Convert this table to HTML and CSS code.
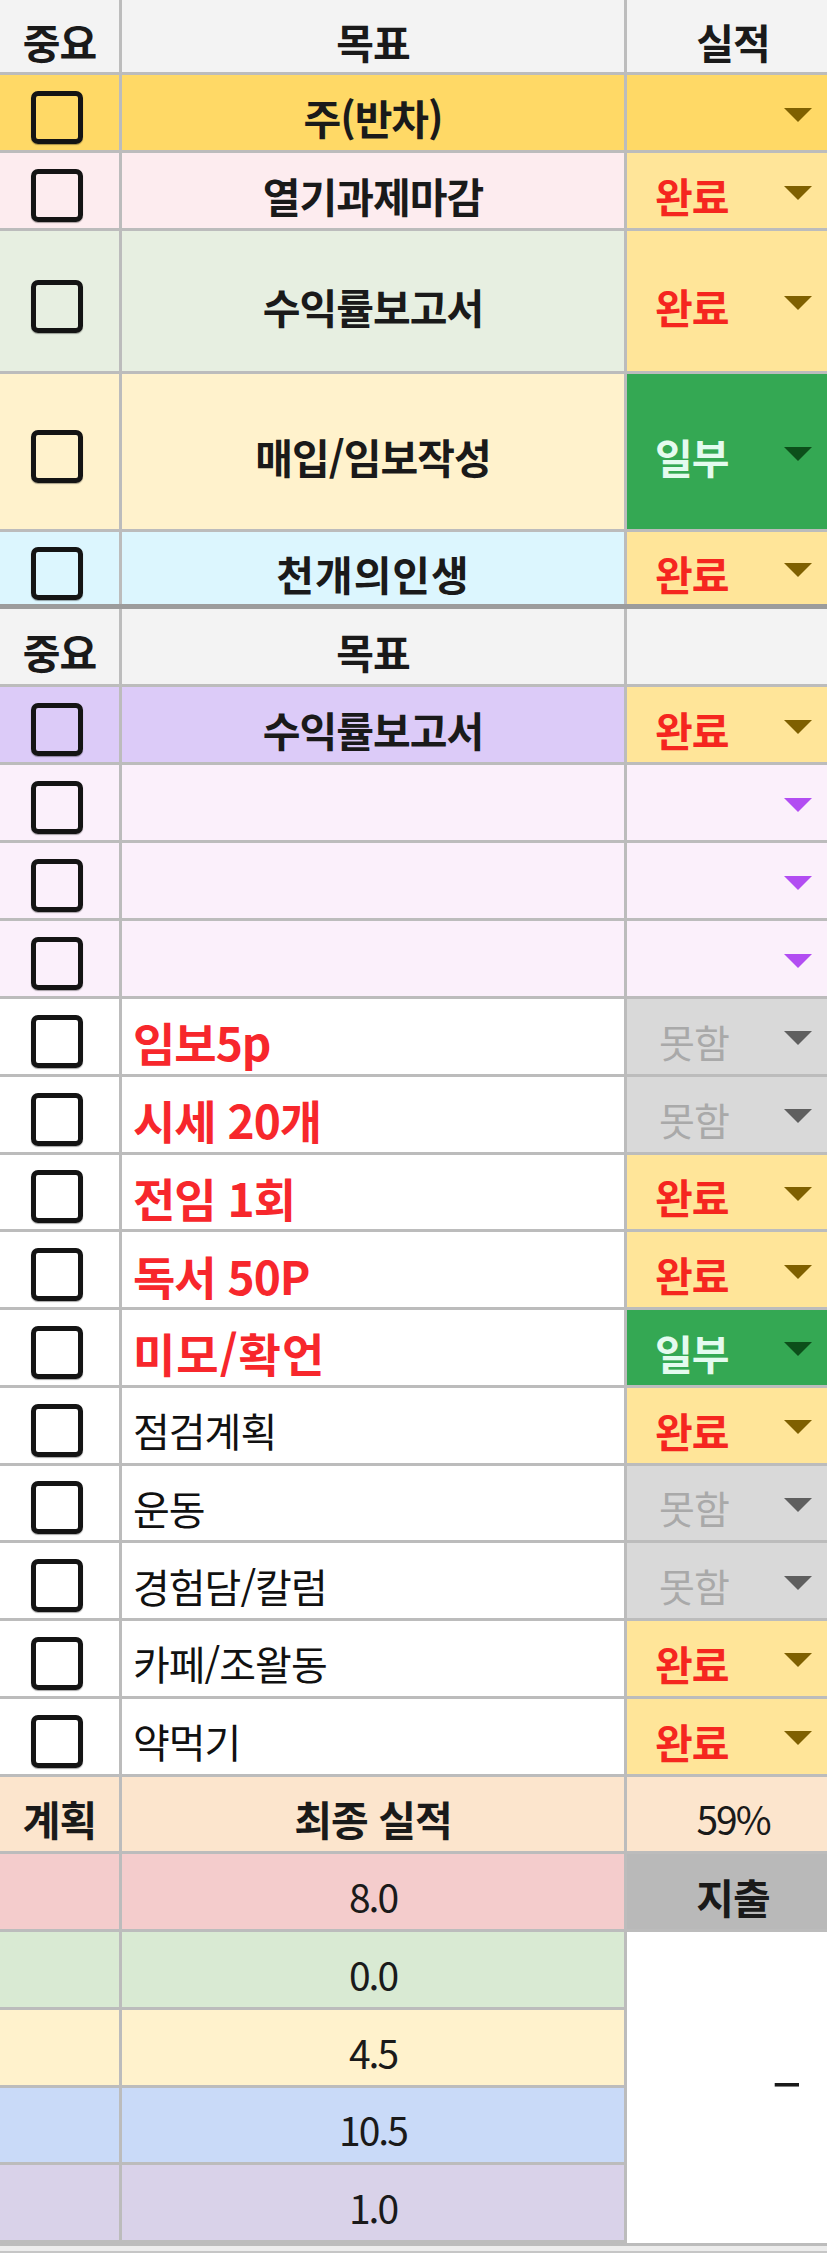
FILE: index.html
```html
<!DOCTYPE html>
<html lang="ko">
<head>
<meta charset="utf-8">
<title>목표 실적</title>
<link rel="stylesheet" href="styles.css">
</head>
<body>
<div class="sheet">
  <div class="grid top">
    <div class="c hd b">중요</div>
    <div class="c hd b">목표</div>
    <div class="c hd b">실적</div>

    <div class="c yel"><span class="cb"></span></div>
    <div class="c yel b">주(반차)</div>
    <div class="c yel dd"><span class="t"></span><svg class="arr gold" viewBox="0 0 28 14"><path d="M0 0H28L14 14Z"/></svg></div>

    <div class="c pink"><span class="cb"></span></div>
    <div class="c pink b">열기과제마감</div>
    <div class="c chip-done dd"><span class="t done">완료</span><svg class="arr gold" viewBox="0 0 28 14"><path d="M0 0H28L14 14Z"/></svg></div>

    <div class="c sage"><span class="cb"></span></div>
    <div class="c sage b">수익률보고서</div>
    <div class="c chip-done dd"><span class="t done">완료</span><svg class="arr gold" viewBox="0 0 28 14"><path d="M0 0H28L14 14Z"/></svg></div>

    <div class="c cream"><span class="cb"></span></div>
    <div class="c cream b">매입/임보작성</div>
    <div class="c chip-part dd"><span class="t part">일부</span><svg class="arr dgreen" viewBox="0 0 28 14"><path d="M0 0H28L14 14Z"/></svg></div>

    <div class="c cyan"><span class="cb"></span></div>
    <div class="c cyan b wide">천개의인생</div>
    <div class="c chip-done dd"><span class="t done">완료</span><svg class="arr gold" viewBox="0 0 28 14"><path d="M0 0H28L14 14Z"/></svg></div>
  </div>
  <div class="sep"></div>
  <div class="grid bottom">
    <div class="c hd b">중요</div>
    <div class="c hd b">목표</div>
    <div class="c hd"></div>

    <div class="c violet"><span class="cb"></span></div>
    <div class="c violet b">수익률보고서</div>
    <div class="c chip-done dd"><span class="t done">완료</span><svg class="arr gold" viewBox="0 0 28 14"><path d="M0 0H28L14 14Z"/></svg></div>

    <div class="c lilac"><span class="cb"></span></div>
    <div class="c lilac"></div>
    <div class="c lilac dd"><span class="t"></span><svg class="arr purple" viewBox="0 0 28 14"><path d="M0 0H28L14 14Z"/></svg></div>

    <div class="c lilac"><span class="cb"></span></div>
    <div class="c lilac"></div>
    <div class="c lilac dd"><span class="t"></span><svg class="arr purple" viewBox="0 0 28 14"><path d="M0 0H28L14 14Z"/></svg></div>

    <div class="c lilac"><span class="cb"></span></div>
    <div class="c lilac"></div>
    <div class="c lilac dd"><span class="t"></span><svg class="arr purple" viewBox="0 0 28 14"><path d="M0 0H28L14 14Z"/></svg></div>

    <div class="c wh"><span class="cb"></span></div>
    <div class="c wh task red">임보5p</div>
    <div class="c chip-not dd"><span class="t not">못함</span><svg class="arr gray" viewBox="0 0 28 14"><path d="M0 0H28L14 14Z"/></svg></div>

    <div class="c wh"><span class="cb"></span></div>
    <div class="c wh task red">시세 20개</div>
    <div class="c chip-not dd"><span class="t not">못함</span><svg class="arr gray" viewBox="0 0 28 14"><path d="M0 0H28L14 14Z"/></svg></div>

    <div class="c wh"><span class="cb"></span></div>
    <div class="c wh task red">전임 1회</div>
    <div class="c chip-done dd"><span class="t done">완료</span><svg class="arr gold" viewBox="0 0 28 14"><path d="M0 0H28L14 14Z"/></svg></div>

    <div class="c wh"><span class="cb"></span></div>
    <div class="c wh task red">독서 50P</div>
    <div class="c chip-done dd"><span class="t done">완료</span><svg class="arr gold" viewBox="0 0 28 14"><path d="M0 0H28L14 14Z"/></svg></div>

    <div class="c wh"><span class="cb"></span></div>
    <div class="c wh task red wide">미모/확언</div>
    <div class="c chip-part dd"><span class="t part">일부</span><svg class="arr dgreen" viewBox="0 0 28 14"><path d="M0 0H28L14 14Z"/></svg></div>

    <div class="c wh"><span class="cb"></span></div>
    <div class="c wh task plain">점검계획</div>
    <div class="c chip-done dd"><span class="t done">완료</span><svg class="arr gold" viewBox="0 0 28 14"><path d="M0 0H28L14 14Z"/></svg></div>

    <div class="c wh"><span class="cb"></span></div>
    <div class="c wh task plain">운동</div>
    <div class="c chip-not dd"><span class="t not">못함</span><svg class="arr gray" viewBox="0 0 28 14"><path d="M0 0H28L14 14Z"/></svg></div>

    <div class="c wh"><span class="cb"></span></div>
    <div class="c wh task plain">경험담/칼럼</div>
    <div class="c chip-not dd"><span class="t not">못함</span><svg class="arr gray" viewBox="0 0 28 14"><path d="M0 0H28L14 14Z"/></svg></div>

    <div class="c wh"><span class="cb"></span></div>
    <div class="c wh task plain">카페/조왈동</div>
    <div class="c chip-done dd"><span class="t done">완료</span><svg class="arr gold" viewBox="0 0 28 14"><path d="M0 0H28L14 14Z"/></svg></div>

    <div class="c wh"><span class="cb"></span></div>
    <div class="c wh task plain">약먹기</div>
    <div class="c chip-done dd"><span class="t done">완료</span><svg class="arr gold" viewBox="0 0 28 14"><path d="M0 0H28L14 14Z"/></svg></div>

    <div class="c peach b">계획</div>
    <div class="c peach b">최종 실적</div>
    <div class="c peach num">59%</div>

    <div class="c rose"></div>
    <div class="c rose num">8.0</div>
    <div class="c graycell b">지출</div>

    <div class="c mint"></div>
    <div class="c mint num">0.0</div>
    <div class="c merged"><span class="dash">-</span></div>

    <div class="c butter"></div>
    <div class="c butter num">4.5</div>

    <div class="c sky"></div>
    <div class="c sky num">10.5</div>

    <div class="c mauve"></div>
    <div class="c mauve num">1.0</div>
  </div>
  <div class="foot"></div>
</div>
</body>
</html>
```

FILE: styles.css
```css
html, body {
  margin: 0;
  padding: 0;
  background: #ffffff;
}

body {
  font-family: "Noto Sans CJK KR", "Noto Sans", sans-serif;
  color: #1a1a1a;
}

.sheet {
  width: 827px;
  overflow: hidden;
}

.grid {
  display: grid;
  grid-template-columns: 119px 502px 212px;
  column-gap: 3px;
  row-gap: 3px;
  width: 839px;
  background: #bcbcbc;
}

.top {
  grid-template-rows: 72px 75px 75px 140px 155px 72px;
}

.bottom {
  grid-template-rows: 75px 75px 75px 75px 75px repeat(16, 74.75px);
}

.sep {
  height: 5px;
  width: 839px;
  background: #9c9c9c;
}

.foot {
  height: 5px;
  border-top: 3px solid #bcbcbc;
  border-bottom: 2px solid #c6c6c6;
  background: #ececec;
  width: 839px;
}

.c {
  display: flex;
  align-items: center;
  justify-content: center;
  box-sizing: border-box;
  padding-top: 10px;
  font-size: 41px;
  line-height: 1;
  letter-spacing: -1px;
  white-space: nowrap;
  overflow: hidden;
}

.b {
  font-weight: 700;
}

.wide {
  letter-spacing: 1px;
}

.hd { background: #f3f3f3; }
.yel { background: #ffd966; }
.pink { background: #fdecef; }
.sage { background: #e7efe1; }
.cream { background: #fff2cc; }
.cyan { background: #dcf6fe; }
.violet { background: #dccbf8; }
.lilac { background: #fbf0fb; }
.wh { background: #ffffff; }
.peach { background: #fce5cd; }
.rose { background: #f4cccc; }
.mint { background: #d9ead3; }
.butter { background: #fff2cc; }
.sky { background: #c9daf8; }
.mauve { background: #d9d2e9; }
.graycell { background: #b9b9b9; }

.chip-done { background: #ffe599; }
.chip-part { background: #34a853; }
.chip-not { background: #d9d9d9; }

.cb {
  display: block;
  width: 52px;
  height: 53px;
  box-sizing: border-box;
  border: 5.5px solid #141414;
  border-radius: 7px;
  margin-right: 6px;
  box-shadow: 0 1px 1px rgba(0, 0, 0, 0.35);
}

.dd {
  justify-content: space-between;
  padding-left: 28px;
  padding-right: 27px;
}

.t {
  font-size: 41px;
}

.done {
  color: #f5261f;
  font-weight: 700;
}

.part {
  color: #e4fbef;
  font-weight: 700;
}

.not {
  color: #a9a9a9;
  font-weight: 400;
  font-size: 39px;
  padding-left: 4px;
}

.arr {
  width: 28px;
  height: 14px;
  margin-top: -6px;
  fill: currentColor;
}

.gold { color: #7f6000; }
.gray { color: #5f5f5f; }
.dgreen { color: #0c4f1a; }
.purple { color: #b24df2; }

.task {
  justify-content: flex-start;
  padding-left: 11px;
}

.red {
  color: #f7272c;
  font-weight: 700;
  font-size: 46px;
}

.plain {
  color: #111111;
  font-weight: 400;
  font-size: 40px;
}

.num {
  font-weight: 400;
  font-size: 39px;
  letter-spacing: -2px;
}

.merged {
  grid-column: 3;
  grid-row: span 5;
  background: #ffffff;
  justify-content: flex-end;
  padding-top: 0;
  padding-bottom: 12px;
  padding-right: 38px;
  font-size: 50px;
}

.dash {
  display: inline-block;
  transform: scaleX(1.9);
  transform-origin: right center;
}
```
